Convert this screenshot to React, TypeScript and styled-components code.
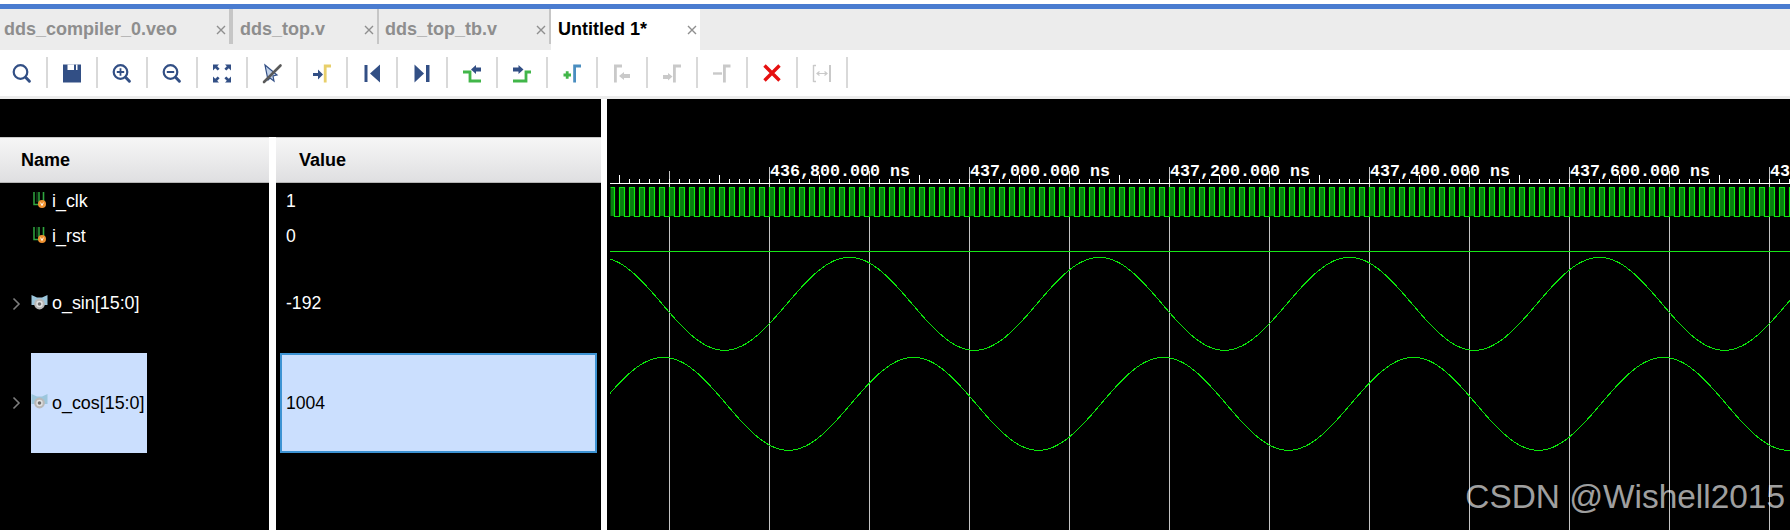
import React from "react";
import styled, { createGlobalStyle } from "styled-components";

const Global = createGlobalStyle`
  html, body { margin: 0; padding: 0; background: #000; }
  body { font-family: "Liberation Sans", Arial, sans-serif; overflow: hidden; }
`;

const Page = styled.div`
  width: 1790px;
  height: 530px;
  display: flex;
  flex-direction: column;
  overflow: hidden;
  background: #000;
`;

const AccentBar = styled.div`
  height: 5px;
  background: #4a7cd0;
  border-top: 4px solid #fff;
`;

const TabBar = styled.div`
  height: 41px;
  display: flex;
  background: #ececec;
`;

const Tab = styled.div<{ $w: number; $pad: number; $active?: boolean; $sep?: number }>`
  width: ${(p) => p.$w}px;
  height: 41px;
  box-sizing: border-box;
  position: relative;
  display: flex;
  align-items: center;
  justify-content: space-between;
  padding: 0 ${(p) => (p.$sep ?? 0) + 3}px 1px ${(p) => p.$pad}px;
  background: ${(p) => (p.$active ? "#fff" : "transparent")};
  color: ${(p) => (p.$active ? "#000" : "#8e8e8e")};
  font-size: 18px;
  font-weight: 700;
  white-space: nowrap;
  &::after {
    content: "";
    display: ${(p) => (p.$sep ? "block" : "none")};
    position: absolute;
    right: 0;
    top: 0;
    width: ${(p) => p.$sep}px;
    height: 35px;
    background: #c6c6c6;
  }
`;

const CloseMark = styled.svg`
  width: 10px;
  height: 10px;
  flex: none;
  margin-top: 2px;
`;

const Toolbar = styled.div`
  height: 31px;
  display: flex;
  padding: 7px 0 8px;
  background: #fff;
  border-bottom: 3px solid #ececec;
`;

const ToolSlot = styled.div`
  width: 48px;
  height: 31px;
  flex: none;
  display: flex;
  align-items: center;
  justify-content: center;
  border-right: 2px solid #d9d9d9;
  &:first-child {
    margin-left: -2px;
  }
`;

const ToolIcon = styled.svg`
  width: 24px;
  height: 24px;
  display: block;
`;

const Main = styled.div`
  flex: 1;
  display: flex;
  min-height: 0;
`;

const SignalPane = styled.div`
  width: 601px;
  flex: none;
  padding-top: 38px;
  display: flex;
  background: #000;
`;

const NameColumn = styled.div`
  width: 269px;
  flex: none;
`;

const ValueColumn = styled.div`
  width: 325px;
  flex: none;
`;

const ColumnRule = styled.div`
  width: 7px;
  flex: none;
  background: #fff;
`;

const PaneRule = styled.div`
  width: 6px;
  flex: none;
  background: #fff;
`;

const HeaderCell = styled.div<{ $pad: number }>`
  height: 44px;
  display: flex;
  align-items: center;
  padding-left: ${(p) => p.$pad}px;
  margin-bottom: 1px;
  background: linear-gradient(#f6f6f6, #dfdfe1);
  border-top: 1px solid #c8c8c8;
  border-bottom: 1px solid #b5b5b5;
  color: #000;
  font-size: 18px;
  font-weight: 700;
`;

const Row = styled.div<{ $h: number }>`
  height: ${(p) => p.$h}px;
  display: flex;
  align-items: center;
`;

const ExpanderSlot = styled.div`
  width: 31px;
  flex: none;
  display: flex;
  justify-content: flex-start;
  padding-left: 12px;
  box-sizing: border-box;
`;

const NameCell = styled.div<{ $selected?: boolean }>`
  height: 100%;
  display: flex;
  align-items: center;
  gap: 4px;
  padding-right: 2px;
  background: ${(p) => (p.$selected ? "#cbdffe" : "transparent")};
  color: ${(p) => (p.$selected ? "#000" : "#fff")};
  font-size: 17.9px;
  white-space: nowrap;
`;

const SignalIcon = styled.svg`
  width: 17px;
  height: 17px;
  flex: none;
  margin-top: -3px;
`;

const ValueCell = styled.div<{ $selected?: boolean }>`
  height: 100%;
  width: ${(p) => (p.$selected ? "317px" : "auto")};
  box-sizing: border-box;
  margin-left: ${(p) => (p.$selected ? "4px" : "10px")};
  display: flex;
  align-items: center;
  padding-left: ${(p) => (p.$selected ? "4px" : "0")};
  background: ${(p) => (p.$selected ? "#cbdffe" : "transparent")};
  border: ${(p) => (p.$selected ? "2px solid #3d93d3" : "none")};
  color: ${(p) => (p.$selected ? "#000" : "#fff")};
  font-size: 17.6px;
`;

const WavePane = styled.div`
  flex: 1;
  position: relative;
  min-width: 0;
  background: #000;
`;

const WaveSvg = styled.svg`
  display: block;
  width: 1183px;
  height: 431px;
`;

const TimeLabel = styled.text`
  font-family: "Liberation Mono", monospace;
  font-weight: 700;
  font-size: 16.67px;
  fill: #fff;
`;

const Watermark = styled.div`
  position: absolute;
  right: 5px;
  top: 378px;
  color: rgba(255, 255, 255, 0.64);
  font-size: 33.4px;
  line-height: 40px;
  white-space: nowrap;
`;

const BLUE = "#324f85";
const GRAY = "#c9c9c9";

const Lens = ({ children }: { children?: React.ReactNode }) => (
  <>
    <circle cx="10.5" cy="11" r="6.8" fill="none" stroke={BLUE} strokeWidth="2.2" />
    <path d="M15.8 16.5 L19.4 20.2" stroke={BLUE} strokeWidth="3" strokeLinecap="round" />
    {children}
  </>
);

const tools: React.ReactNode[] = [
  <Lens />,
  <>
    <path d="M3 3.5 H21 V21.5 H3 Z" fill={BLUE} />
    <path d="M7.5 3.5 H14 V9 H7.5 Z M16 3.5 H17.5 V9 H16 Z" fill="#fff" />
  </>,
  <Lens>
    <path d="M6.8 11 H14.2 M10.5 7.3 V14.7" stroke={BLUE} strokeWidth="1.8" />
  </Lens>,
  <Lens>
    <path d="M6.8 11 H14.2" stroke={BLUE} strokeWidth="2" />
  </Lens>,
  <g fill={BLUE}>
    <path d="M3 3.5 H9 L7.2 5.3 L9.6 7.7 L7.7 9.6 L5.2 7.2 L3 9.4 Z" />
    <path d="M21 3.5 H15 L16.8 5.3 L14.4 7.7 L16.3 9.6 L18.8 7.2 L21 9.4 Z" />
    <path d="M3 21.5 H9 L7.2 19.7 L9.6 17.3 L7.7 15.4 L5.2 17.8 L3 15.6 Z" />
    <path d="M21 21.5 H15 L16.8 19.7 L14.4 17.3 L16.3 15.4 L18.8 17.8 L21 15.6 Z" />
  </g>,
  <>
    <path d="M5 4 L17 14 L13 15 L14 20 L10 17 L8 19 Z" fill="#c3d3ea" stroke={BLUE} strokeWidth="1.2" />
    <path d="M4 21 L20.5 4.5" stroke="#5a5a5a" strokeWidth="2.6" strokeLinecap="round" />
  </>,
  <>
    <path d="M3 12 H8 V8.5 L13 13.5 L8 18.5 V15 H3 Z" fill={BLUE} />
    <path d="M15.2 21.5 V5 H21" fill="none" stroke="#e8cf6a" strokeWidth="2.8" />
  </>,
  <>
    <path d="M4.5 4 H7.5 V21 H4.5 Z" fill={BLUE} />
    <path d="M20 3.5 V21.5 L10 12.5 Z" fill={BLUE} />
  </>,
  <>
    <path d="M4.5 3.5 V21.5 L14 12.5 Z" fill={BLUE} />
    <path d="M16 4 H19.5 V21 H16 Z" fill={BLUE} />
  </>,
  <>
    <path d="M3 11 H10 V20 H21" fill="none" stroke="#41b649" strokeWidth="2.8" />
    <path d="M11 8.5 L16 4 V6.5 H21 V10.5 H16 V13 Z" fill={BLUE} />
  </>,
  <>
    <path d="M3 20 H16 V11 H21" fill="none" stroke="#41b649" strokeWidth="2.8" />
    <path d="M13.5 8.5 L8.5 4 V6.5 H3 V10.5 H8.5 V13 Z" fill={BLUE} />
  </>,
  <>
    <path d="M3.5 14 H11 M7.2 10.2 V17.8" stroke="#41b649" strokeWidth="2.8" />
    <path d="M14.6 21.5 V5 H21" fill="none" stroke="#4a8ec0" strokeWidth="2.8" />
  </>,
  <>
    <path d="M5.4 21.5 V5 H12" fill="none" stroke={GRAY} strokeWidth="2.8" />
    <path d="M9 15 L14 11 V13 H20 V17 H14 V19 Z" fill={GRAY} />
  </>,
  <>
    <path d="M14.4 21.5 V5 H21" fill="none" stroke={GRAY} strokeWidth="2.8" />
    <path d="M12.5 15.5 L8 12 V14 H3 V18 H8 V19.5 Z" fill={GRAY} />
  </>,
  <>
    <path d="M3 12.5 H12" stroke={GRAY} strokeWidth="2.4" />
    <path d="M14.4 21.5 V5 H20.5" fill="none" stroke={GRAY} strokeWidth="2.8" />
  </>,
  <path d="M4.5 4.5 L19.5 19.5 M19.5 4.5 L4.5 19.5" stroke="#e61010" strokeWidth="3.4" />,
  <>
    <path d="M3.5 4.5 H6 M3.5 20.5 H6 M3.5 4 V21" fill="none" stroke={GRAY} strokeWidth="1.4" />
    <path d="M19 4 H21 V21 H19 Z" fill={GRAY} />
    <path d="M7 12.5 H17 M9.5 10.5 L7 12.5 L9.5 14.5 M14.5 10.5 L17 12.5 L14.5 14.5" fill="none" stroke={GRAY} strokeWidth="1.2" />
  </>,
];

const tabs = [
  { label: "dds_compiler_0.veo", w: 233, pad: 4, sep: 4 },
  { label: "dds_top.v", w: 146, pad: 7, sep: 2 },
  { label: "dds_top_tb.v", w: 172, pad: 6, sep: 2 },
  { label: "Untitled 1*", w: 149, pad: 7, active: true },
];

const Chevron = () => (
  <svg width="9" height="14" viewBox="0 0 9 14">
    <path d="M1.5 1.5 L7 7 L1.5 12.5" fill="none" stroke="#7d7d7d" strokeWidth="1.6" />
  </svg>
);

const ScalarGlyph = () => (
  <SignalIcon viewBox="0 0 17 17">
    <path d="M3 0 V12.5 H8 V0" fill="none" stroke="#2fa63f" strokeWidth="1.5" />
    <path d="M12.5 0 V9" fill="none" stroke="#2fa63f" strokeWidth="1.6" />
    <path d="M6 0 V10" fill="none" stroke="#14561f" strokeWidth="1" />
    <circle cx="11" cy="12" r="4" fill="#ee9130" />
    <path d="M9.6 10.6 L11 13.6 L12.4 10.6" fill="none" stroke="#fff" strokeWidth="0.9" />
  </SignalIcon>
);

const BusGlyph = () => (
  <SignalIcon viewBox="0 0 17 17">
    <path d="M0.5 1 L6 3.5 H11 L16.5 1 V11 H0.5 Z" fill="#9cc6dc" />
    <circle cx="8.5" cy="10" r="5.4" fill="#b9b9b9" />
    <circle cx="8.5" cy="10" r="3.2" fill="#e2e2e2" />
    <circle cx="8.5" cy="10" r="1.8" fill="#6f6f6f" />
  </SignalIcon>
);

const signals = [
  { name: "i_clk", value: "1", h: 35, kind: "scalar" },
  { name: "i_rst", value: "0", h: 35, kind: "scalar" },
  { name: "o_sin[15:0]", value: "-192", h: 99, kind: "bus" },
  { name: "o_cos[15:0]", value: "1004", h: 100, kind: "bus", selected: true },
];

const wave = (center: number, peak: number) => {
  const pts: string[] = [];
  for (let x = 610; x <= 1790; x += 4) {
    const y = center - 46.5 * Math.cos((2 * Math.PI * (x - peak)) / 250);
    pts.push(`${x},${y.toFixed(1)}`);
  }
  return pts.join(" ");
};

const range = (start: number, end: number, step: number) => {
  const out: number[] = [];
  for (let v = start; v <= end; v += step) out.push(v);
  return out;
};

const labels = [
  [769, "436,800.000 ns"],
  [969, "437,000.000 ns"],
  [1169, "437,200.000 ns"],
  [1369, "437,400.000 ns"],
  [1569, "437,600.000 ns"],
  [1769, "43"],
] as const;

const Waveform = () => {
  const clockHighs = range(619, 1790, 10);
  const clockPath =
    "M610.5 187.5 H614.5 V216.5 H619.5 " +
    clockHighs.map((x) => `V187.5 H${x + 5.5} V216.5 H${x + 10.5}`).join(" ");
  return (
    <WaveSvg viewBox="607 99 1183 431">
      {range(669, 1790, 100).map((x) => (
        <path
          key={x}
          d={`M${x + 0.5} ${(x - 769) % 200 === 0 ? 167 : 171} V530`}
          stroke="#c4c4c4"
          strokeWidth="1"
          shapeRendering="crispEdges"
        />
      ))}
      <path d="M610 183.5 H1790" stroke="#fff" strokeWidth="1.4" shapeRendering="crispEdges" />
      {range(619, 1790, 10).map((x) => (
        <path
          key={x}
          d={`M${x + 0.5} ${(x - 619) % 100 === 0 ? 175 : 179} V183`}
          stroke="#fff"
          strokeWidth="1"
          shapeRendering="crispEdges"
        />
      ))}
      {labels.map(([x, t]) => (
        <TimeLabel key={x} x={x + 1} y={176}>
          {t}
        </TimeLabel>
      ))}
      <path d="M610.5 188 H614 V216 H610.5 Z" fill="#0a7d12" />
      {clockHighs.map((x) => (
        <path key={x} d={`M${x + 0.5} 188 H${x + 5.5} V216 H${x + 0.5} Z`} fill="#0a7d12" />
      ))}
      <path d={clockPath} fill="none" stroke="#0bec0b" strokeWidth="1.15" />
      <path d="M610 251.5 H1790" stroke="#17e517" strokeWidth="1" shapeRendering="crispEdges" />
      <polyline points={wave(303.8, 849.5)} fill="none" stroke="#0be60b" strokeWidth="1" shapeRendering="crispEdges" />
      <polyline points={wave(403.8, 663.5)} fill="none" stroke="#0be60b" strokeWidth="1" shapeRendering="crispEdges" />
    </WaveSvg>
  );
};

export default function App() {
  return (
    <Page>
      <Global />
      <AccentBar />
      <TabBar>
        {tabs.map((t) => (
          <Tab key={t.label} $w={t.w} $pad={t.pad} $active={t.active} $sep={t.sep}>
            {t.label}
            <CloseMark viewBox="0 0 10 10">
              <path d="M1 1 L9 9 M9 1 L1 9" stroke="#8f8f8f" strokeWidth="1.4" />
            </CloseMark>
          </Tab>
        ))}
      </TabBar>
      <Toolbar>
        {tools.map((icon, i) => (
          <ToolSlot key={i}>
            <ToolIcon viewBox="0 0 24 24">{icon}</ToolIcon>
          </ToolSlot>
        ))}
      </Toolbar>
      <Main>
        <SignalPane>
          <NameColumn>
            <HeaderCell $pad={21}>Name</HeaderCell>
            {signals.map((s) => (
              <Row key={s.name} $h={s.h}>
                <ExpanderSlot>{s.kind === "bus" && <Chevron />}</ExpanderSlot>
                <NameCell $selected={s.selected}>
                  {s.kind === "bus" ? <BusGlyph /> : <ScalarGlyph />}
                  {s.name}
                </NameCell>
              </Row>
            ))}
          </NameColumn>
          <ColumnRule />
          <ValueColumn>
            <HeaderCell $pad={23}>Value</HeaderCell>
            {signals.map((s) => (
              <Row key={s.name} $h={s.h}>
                <ValueCell $selected={s.selected}>{s.value}</ValueCell>
              </Row>
            ))}
          </ValueColumn>
        </SignalPane>
        <PaneRule />
        <WavePane>
          <Waveform />
          <Watermark>CSDN @Wishell2015</Watermark>
        </WavePane>
      </Main>
    </Page>
  );
}
